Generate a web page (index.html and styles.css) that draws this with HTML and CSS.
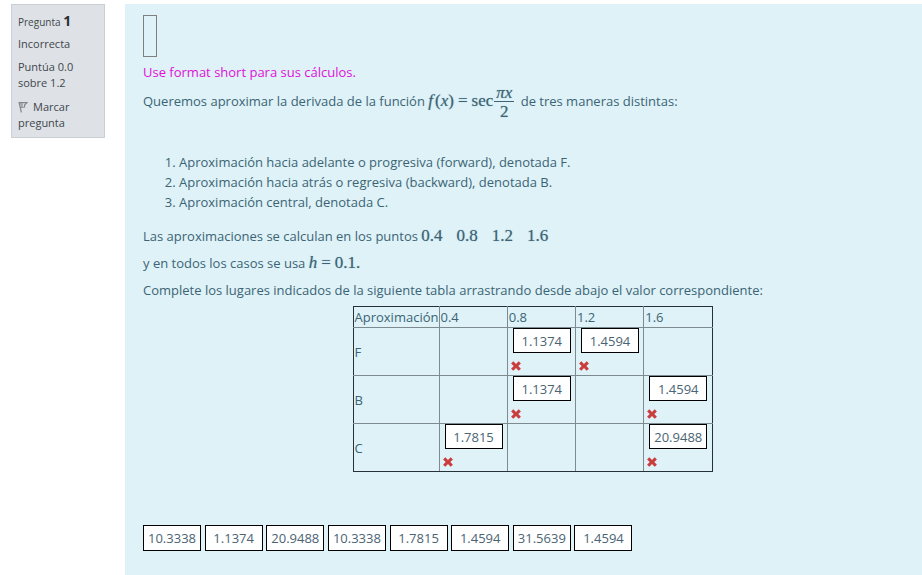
FILE: index.html
```
<!DOCTYPE html>
<html lang="es">
<head>
<meta charset="utf-8">
<title>Pregunta 1</title>
<link rel="stylesheet" href="styles.css">
</head>
<body>
<svg class="defs" aria-hidden="true">
  <symbol id="cross" viewBox="0 0 10 10"><path d="M2.3 0.3 L5 2.9 L7.7 0.3 L9.9 2.4 L7.3 5 L9.9 7.7 L7.7 9.8 L5 7.1 L2.3 9.8 L0.1 7.7 L2.7 5 L0.1 2.4 Z" fill="#cb3d3d"/></symbol>
</svg>
<div class="question">
  <aside class="info">
    <h3 class="info-title">Pregunta <strong class="number">1</strong></h3>
    <div class="info-row">Incorrecta</div>
    <div class="info-row">Puntúa 0.0 sobre 1.2</div>
    <a class="info-row flag" href="#"><svg class="flag-icon" viewBox="0 0 10 12" aria-hidden="true"><path d="M1 1 L3.4 11.5 M1.2 1.5 L9 1.6 L6.5 4 L6.6 6 L2.4 6.4" fill="none" stroke="#85898d" stroke-width="1.2"/><path d="M2 2 L5 2 L4.8 5.8 L2.7 6 Z" fill="#a2a6aa"/></svg>Marcar pregunta</a>
  </aside>
  <main class="content">
    <div class="blank"></div>
    <p class="hint">Use format short para sus cálculos.</p>
    <p class="formula">Queremos aproximar la derivada de la función <span class="math"><i class="fn">f</i>(<i>x</i>)<span class="rel">=</span>sec<span class="frac"><span class="num"><i>πx</i></span><span class="den">2</span></span></span> de tres maneras distintas:</p>
    <ol class="methods">
      <li>Aproximación hacia adelante o progresiva (forward), denotada F.</li>
      <li>Aproximación hacia atrás o regresiva (backward), denotada B.</li>
      <li>Aproximación central, denotada C.</li>
    </ol>
    <p>Las aproximaciones se calculan en los puntos <span class="math points"><span>0.4</span><span>0.8</span><span>1.2</span><span>1.6</span></span></p>
    <p>y en todos los casos se usa <span class="math"><i>h</i><span class="rel">=</span>0.1.</span></p>
    <p>Complete los lugares indicados de la siguiente tabla arrastrando desde abajo el valor correspondiente:</p>
    <table class="grid">
      <thead>
        <tr><th class="label" scope="col">Aproximación</th><th scope="col">0.4</th><th scope="col">0.8</th><th scope="col">1.2</th><th scope="col">1.6</th></tr>
      </thead>
      <tbody>
        <tr><th scope="row">F</th><td></td><td><button class="value">1.1374</button><svg class="cross"><use href="#cross"/></svg></td><td><button class="value">1.4594</button><svg class="cross"><use href="#cross"/></svg></td><td></td></tr>
        <tr><th scope="row">B</th><td></td><td><button class="value">1.1374</button><svg class="cross"><use href="#cross"/></svg></td><td></td><td><button class="value">1.4594</button><svg class="cross"><use href="#cross"/></svg></td></tr>
        <tr><th scope="row">C</th><td><button class="value">1.7815</button><svg class="cross"><use href="#cross"/></svg></td><td></td><td></td><td><button class="value">20.9488</button><svg class="cross"><use href="#cross"/></svg></td></tr>
      </tbody>
    </table>
    <div class="choices">
      <button class="value">10.3338</button>
      <button class="value">1.1374</button>
      <button class="value">20.9488</button>
      <button class="value">10.3338</button>
      <button class="value">1.7815</button>
      <button class="value">1.4594</button>
      <button class="value">31.5639</button>
      <button class="value">1.4594</button>
    </div>
  </main>
</div>
</body>
</html>
```
FILE: styles.css
```
* { box-sizing: border-box; }
body {
  margin: 0;
  background: #fff;
  color: #3c6474;
  font: 13px/20px "Open Sans", "Noto Sans", sans-serif;
}
.defs { display: none; }
.question {
  display: flex;
  align-items: flex-start;
  gap: 20px;
  min-height: 100vh;
  padding: 4px 0 0 11px;
}
.info {
  flex: 0 0 94px;
  padding: 6px;
  border: 1px solid #cacfd4;
  background: #dee2e6;
  color: #41464c;
  font-size: 11px;
  line-height: 16px;
}
.info-title {
  margin: 0;
  font-size: 10px;
  font-weight: 400;
  line-height: 20px;
}
.number { font-size: 14px; color: #2b3036; }
.info-row {
  display: block;
  margin-top: 7px;
  color: inherit;
  text-decoration: none;
}
.info-title + .info-row { margin-top: 4px; }
.flag { margin-top: 8px; }
.flag-icon {
  width: 10px;
  height: 12px;
  margin-right: 5px;
  vertical-align: -2px;
}
.content {
  flex: 1;
  align-self: stretch;
  padding: 11px 0 24px 18px;
  background: #def2f8;
}
.blank {
  width: 14px;
  height: 42px;
  margin-bottom: 5px;
  border: 1px solid #808080;
}
p { margin: 0 0 7px; }
.hint { margin: 0; color: #e010d8; }
.formula { margin: 0; line-height: 38px; }
.math {
  font: 17px/20px "Liberation Serif", serif;
  text-shadow: 0 0 1px #3c647488;
}
.fn { margin-right: 2px; }
.rel { margin: 0 4px; }
.frac {
  display: inline-flex;
  flex-direction: column;
  vertical-align: middle;
  margin: 0 3px 0 1px;
  line-height: 17px;
  text-align: center;
}
.num { border-bottom: 1px solid #3c6474; }
.num, .den { padding: 0 2px; }
.den { padding-top: 1px; }
.methods {
  margin: 32px 0 14px;
  padding-left: 36px;
}
.points { display: inline-flex; gap: 14px; }
.grid {
  width: 360px;
  margin: -1px auto 0;
  border-collapse: collapse;
  table-layout: fixed;
}
.grid th, .grid td {
  height: 48px;
  padding: 1px;
  border: 1px solid #7d8a8e;
  font-weight: 400;
  text-align: left;
}
.grid td { padding: 0 3px; vertical-align: top; }
.grid thead th { height: 21px; padding: 0 1px; border-top-color: #263238; }
.grid tr > :first-child { border-left-color: #263238; }
.grid tr > :last-child { border-right-color: #263238; }
.grid tbody tr:last-child > * { border-bottom-color: #263238; }
.grid .label { width: 86px; }
.value {
  width: 58px;
  height: 26px;
  padding: 0;
  border: 1px solid #000;
  background: #fff;
  color: #4a6474;
  font: inherit;
  font-size: 13px;
  vertical-align: top;
}
.grid .value { display: block; height: 25px; margin-left: 2px; }
.cross {
  display: block;
  width: 10px;
  height: 10px;
  margin-top: 8px;
}
.choices {
  margin-top: 53px;
  font-size: 14px;
}
```
